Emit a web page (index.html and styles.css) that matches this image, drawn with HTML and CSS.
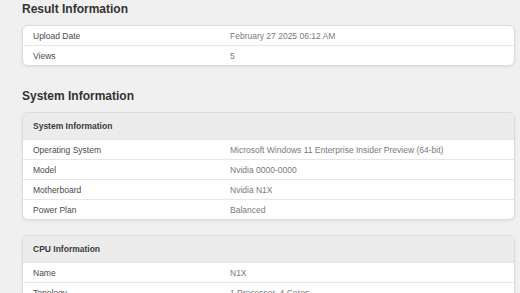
FILE: index.html
```html
<!DOCTYPE html>
<html lang="en">
<head>
  <meta charset="UTF-8" />
  <meta name="viewport" content="width=device-width, initial-scale=1" />
  <title>Result Information</title>
  <link rel="stylesheet" href="styles.css">
</head>
<body>
  <div class="container">
    <h2 class="section-title first">Result Information</h2>
    <div class="info-card">
      <div class="info-row">
        <div class="info-label">Upload Date</div>
        <div class="info-value">February 27 2025 06:12 AM</div>
      </div>
      <div class="info-row">
        <div class="info-label">Views</div>
        <div class="info-value">5</div>
      </div>
    </div>

    <h2 class="section-title">System Information</h2>
    <div class="info-card">
      <div class="card-head">System Information</div>
      <div class="info-row">
        <div class="info-label">Operating System</div>
        <div class="info-value">Microsoft Windows 11 Enterprise Insider Preview (64-bit)</div>
      </div>
      <div class="info-row">
        <div class="info-label">Model</div>
        <div class="info-value">Nvidia 0000-0000</div>
      </div>
      <div class="info-row">
        <div class="info-label">Motherboard</div>
        <div class="info-value">Nvidia N1X</div>
      </div>
      <div class="info-row">
        <div class="info-label">Power Plan</div>
        <div class="info-value">Balanced</div>
      </div>
    </div>

    <div class="info-card spaced">
      <div class="card-head">CPU Information</div>
      <div class="info-row">
        <div class="info-label">Name</div>
        <div class="info-value">N1X</div>
      </div>
      <div class="info-row">
        <div class="info-label">Topology</div>
        <div class="info-value">1 Processor, 4 Cores</div>
      </div>
    </div>
  </div>
</body>
</html>
```

FILE: styles.css
```css
body {
  font-family: "Liberation Sans", Arial, sans-serif;
  margin: 0;
  background: #f0f0f0;
  color: #333;
}

.container {
  padding: 0 5px 0 22px;
}

.section-title {
  font-size: 12px;
  line-height: 18px;
  font-weight: bold;
  color: #333;
  margin: 21px 0 7px;
}

.section-title.first {
  margin-top: 0;
}

.info-card {
  background: #fff;
  border: 1px solid #dcdcdc;
  border-radius: 6px;
  box-shadow: 0 1px 3px rgba(0, 0, 0, 0.08);
  overflow: hidden;
}

.info-card.spaced {
  margin-top: 15px;
}

.card-head {
  background: #ececec;
  height: 26px;
  line-height: 26px;
  padding: 0 10px;
  font-size: 8.5px;
  font-weight: bold;
  color: #3a3a3a;
}

.info-row {
  display: grid;
  grid-template-columns: 197px 1fr;
  height: 19px;
  align-items: center;
  padding: 0 10px;
  font-size: 8.5px;
  border-top: 1px solid #e6e6e6;
}

.info-card > .info-row:first-child {
  border-top: none;
}

.info-label {
  color: #4a4a4a;
}

.info-value {
  color: #7a7a7a;
}
```
